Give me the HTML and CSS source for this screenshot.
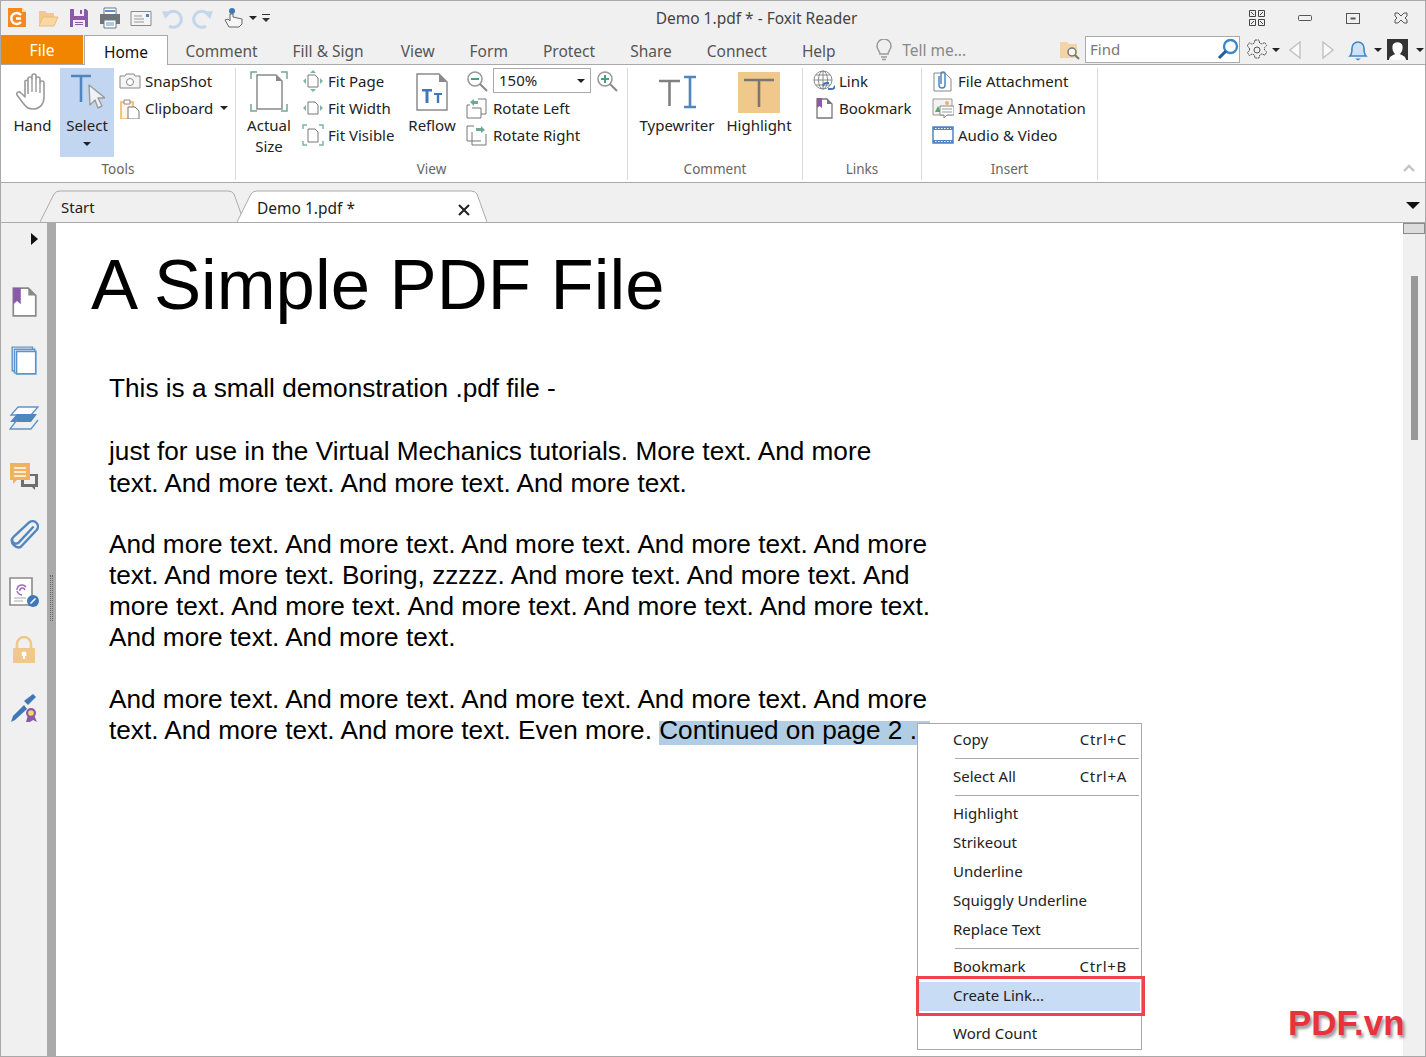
FILE: index.html
```html
<!DOCTYPE html>
<html lang="en">
<head>
    <meta charset="UTF-8">
    <title>Demo 1.pdf * - Foxit Reader</title>
    <link rel="stylesheet" href="styles.css">
</head>
<body>
<div class="window">

    <!-- title bar -->
    <div class="titlebar">
        <div class="qat">
            <svg viewBox="0 0 22 22"><path d="M2 1h14l4 4v15H2z" fill="#f28a1e"/><path d="M16 1l4 4h-4z" fill="#fbd9a8"/><path d="M15 8a5.500 5.500 0 1 0 0 7M10 11.500h5" fill="none" stroke="#fff" stroke-width="2.400"/></svg>
            <svg viewBox="0 0 22 22"><path d="M2 4h6l2 2h7v4H6l-4 9z" fill="#f0c98c"/><path d="M6 10h15l-4 9H2z" fill="#f7d7a4" stroke="#edbc78"/></svg>
            <svg viewBox="0 0 22 22"><path d="M2 2h16l2 2v16H2z" fill="#8a5aa8"/><path d="M6 2h10v7H6z" fill="#f1ebf5"/><path d="M12 3h2v4h-2z" fill="#8a5aa8"/><path d="M5 13h12v7H5z" fill="#f1ebf5"/><path d="M7 15h8v1H7zM7 17h8v1H7z" fill="#8a5aa8"/></svg>
            <svg viewBox="0 0 22 22"><path d="M5 1h12v7H5z" fill="#fff" stroke="#777"/><path d="M1 7h20v10H1z" fill="#6f7478"/><path d="M5 13h12v8H5z" fill="#fff" stroke="#6f7478"/><path d="M7 16h8M7 18h8" stroke="#5b92c9"/><path d="M6 4h10" stroke="#5b92c9" stroke-width="2"/></svg>
            <svg viewBox="0 0 22 22"><path d="M1 4.500h20v14H1z" fill="#f4f4f4" stroke="#8a8a8a"/><path d="M4 9h8M4 12h10M4 15h10" stroke="#999"/><path d="M16 7h3v3h-3z" fill="#4f86c0"/></svg>
            <svg viewBox="0 0 22 22"><path d="M5 9a8 8 0 1 1 3 10" fill="none" stroke="#c3d6ea" stroke-width="3"/><path d="M1 4l9 1-6 7z" fill="#c3d6ea"/></svg>
            <svg viewBox="0 0 22 22"><path d="M17 9a8 8 0 1 0-3 10" fill="none" stroke="#c3d6ea" stroke-width="3"/><path d="M21 4l-9 1 6 7z" fill="#c3d6ea"/></svg>
            <svg viewBox="0 0 22 22"><circle cx="9" cy="4" r="3" fill="#3f78b5"/><path d="M7 7v7l-2-2-3 1 4 7h10l3-3v-5l-9-2V7z" fill="#f6f6f6" stroke="#666"/></svg>
            <span class="caret qat-caret"></span>
            <span class="customize"></span>
        </div>
        <div class="title">Demo 1.pdf * - Foxit Reader</div>
        <div class="win-controls">
            <svg class="win-grid" viewBox="0 0 16 16"><path d="M.500.500h6v6h-6zM9.500.500h6v6h-6zM.500 9.500h6v6h-6zM9.500 9.500h6v6h-6z" fill="none" stroke="#444"/><path d="M2 2l3 3M14 2l-3 3M2 14l3-3M14 14l-3-3" stroke="#444"/></svg>
            <svg class="win-min" viewBox="0 0 14 6"><rect x=".5" y=".5" width="13" height="5" rx="1" fill="none" stroke="#555"/></svg>
            <svg class="win-max" viewBox="0 0 14 11"><rect x=".5" y=".5" width="13" height="10" fill="none" stroke="#555"/><path d="M4.500 5.500h5" stroke="#555" stroke-width="2"/></svg>
            <svg class="win-close" viewBox="0 0 14 12"><path d="M1 1h3l3 3 3-3h3v3l-2 2 2 2v3h-3L7 8l-3 3H1V8l2-2-2-2z" fill="none" stroke="#555"/></svg>
        </div>
    </div>

    <!-- ribbon tabs -->
    <div class="tabbar">
        <div class="file-tab">File</div>
        <div class="ribbon-tab active">Home</div>
        <div class="ribbon-tab">Comment</div>
        <div class="ribbon-tab">Fill &amp; Sign</div>
        <div class="ribbon-tab tab-view">View</div>
        <div class="ribbon-tab">Form</div>
        <div class="ribbon-tab">Protect</div>
        <div class="ribbon-tab">Share</div>
        <div class="ribbon-tab">Connect</div>
        <div class="ribbon-tab">Help</div>
        <div class="tell-me">
            <svg viewBox="0 0 18 22"><path d="M5 15c0-3-3-4-3-8a7 7 0 0 1 14 0c0 4-3 5-3 8z" fill="none" stroke="#999" stroke-width="1.500"/><path d="M6 18h6M7 20.500h4" stroke="#999" stroke-width="1.500"/></svg>
            Tell me...
        </div>
        <div class="tabbar-tools">
            <svg class="tool-folder" viewBox="0 0 22 22"><path d="M1 3h7l2 2h8v14H1z" fill="#f3d5a5"/><circle cx="13" cy="13" r="4" fill="#f5f5f5" stroke="#777" stroke-width="1.500"/><path d="M16 16l4 4" stroke="#777" stroke-width="2"/></svg>
            <div class="find-box">
                <span>Find</span>
                <svg viewBox="0 0 22 22"><circle cx="13.500" cy="8.500" r="6.500" fill="#fff" stroke="#3f86c6" stroke-width="2.400"/><path d="M9 13l-7 7" stroke="#1f5f99" stroke-width="3"/></svg>
            </div>
            <svg class="tool-gear" viewBox="0 0 22 22"><path d="M9 1h4l.6 3 2.400 1 2.600-1.600 2 3.200-2.200 2 .2 2.400 2.200 2-2 3.200-2.800-1.400-2.200 1.200-.8 3H9l-.6-3-2.400-1-2.600 1.600-2-3.200 2.200-2-.2-2.400-2.200-2 2-3.200L6 5.200 8.200 4z" fill="none" stroke="#555" stroke-dasharray="2 .6"/><circle cx="11" cy="11" r="3" fill="none" stroke="#555"/></svg>
            <span class="caret gear-caret"></span>
            <svg class="tool-prev" viewBox="0 0 12 18"><path d="M11 1v16L1 9z" fill="#fafafa" stroke="#c4c4c4" stroke-width="1.500"/></svg>
            <svg class="tool-next" viewBox="0 0 12 18"><path d="M1 1v16l10-8z" fill="#fafafa" stroke="#c4c4c4" stroke-width="1.500"/></svg>
            <svg class="tool-bell" viewBox="0 0 20 22"><path d="M2 17c2-2 2-4 2-8a6 6 0 0 1 12 0c0 4 0 6 2 8z" fill="#cfe2f5" stroke="#3f86c6" stroke-width="1.600"/><path d="M7 19.500h6l-3 2z" fill="#3f86c6"/></svg>
            <span class="caret bell-caret"></span>
            <svg class="tool-avatar" viewBox="0 0 21 21"><path d="M0 0h21v21H0z" fill="#333"/><path d="M2 21c0-4 5-5 6-6-2-2-3-5-2.500-8 .5-5 9.500-5 10 0 .5 3-.5 6-2.500 8 1 1 6 2 6 6z" fill="#fff"/></svg>
            <span class="caret avatar-caret"></span>
        </div>
    </div>

    <!-- ribbon -->
    <div class="ribbon">
        <div class="group group-tools">
            <div class="group-body">
                <div class="big-btn btn-hand">
                    <div class="big-icon">
                        <svg width="34" height="38" viewBox="0 0 34 38"><path d="M12 21V6a2 2 0 0 1 4 0V3a2 2 0 0 1 4 0v3a2 2 0 0 1 4 0v4a2 2 0 0 1 4 0v14c0 7-4 12-11 12-5 0-7-2-10-6l-6-8c-1-3 2-4 4-2l4 4V8a2 2 0 0 1 3 0" fill="#fff" stroke="#9a9a9a" stroke-width="1.600" stroke-linejoin="round"/><path d="M16 6v13M20 6v13M24 10v10" stroke="#9a9a9a" stroke-width="1.400"/></svg>
                    </div>
                    <div class="big-label">Hand</div>
                </div>
                <div class="big-btn btn-select">
                    <div class="big-icon">
                        <svg width="36" height="40" viewBox="0 0 36 40"><path d="M2 4h20M12 4v26" stroke="#4f86c0" stroke-width="2.600" fill="none"/><path d="M20 13l1 20 5-5 3 8 4-2-4-8h7z" fill="#eef3f9" stroke="#9a9a9a" stroke-width="1.400" stroke-linejoin="round"/></svg>
                    </div>
                    <div class="big-label">Select</div>
                    <span class="caret select-caret"></span>
                </div>
                <div class="small-col">
                    <div class="row">
                        <svg viewBox="0 0 22 22"><path d="M1 6h5l1-2h8l1 2h5v12H1z" fill="#f5f5f5" stroke="#888"/><circle cx="11" cy="12" r="3.500" fill="#fff" stroke="#888"/></svg>
                        SnapShot
                    </div>
                    <div class="row">
                        <svg viewBox="0 0 22 22"><path d="M2 5h12v17H2z" fill="#fdf6ea" stroke="#f0b25e" stroke-width="1.500"/><path d="M5 3h6v4H5z" fill="#fff" stroke="#888"/><path d="M9 10h7l4 4v8H9z" fill="#fff" stroke="#777"/></svg>
                        Clipboard
                        <span class="caret clip-caret"></span>
                    </div>
                </div>
            </div>
            <div class="group-label">Tools</div>
        </div>

        <div class="group group-view">
            <div class="group-body">
                <div class="big-btn btn-actual">
                    <div class="big-icon">
                        <svg width="38" height="42" viewBox="0 0 38 42"><path d="M7 4h19l6 6v28H7z" fill="#fff" stroke="#8a8a8a" stroke-width="1.500"/><path d="M26 4l6 6h-6z" fill="#8a8a8a"/><path d="M1 8V1h6M31 1h6v7M1 33v7h6M31 40h6v-7" fill="none" stroke="#6fa896" stroke-width="1.500"/></svg>
                    </div>
                    <div class="big-label">Actual<br>Size</div>
                </div>
                <div class="small-col col-fit">
                    <div class="row">
                        <svg viewBox="0 0 22 22"><path d="M6 5h7l3 3v9H6z" fill="#fff" stroke="#777"/><path d="M1 11l3-3v6zM21 11l-3-3v6zM11 0l-3 3h6zM11 22l-3-3h6z" fill="#7fb5a4"/></svg>
                        Fit Page
                    </div>
                    <div class="row">
                        <svg viewBox="0 0 22 22"><path d="M6 5h7l3 3v9H6z" fill="#fff" stroke="#777"/><path d="M1 11l3-3v6zM21 11l-3-3v6z" fill="#7fb5a4"/></svg>
                        Fit Width
                    </div>
                    <div class="row">
                        <svg viewBox="0 0 22 22"><path d="M6 5h7l3 3v10H6z" fill="#fff" stroke="#777"/><path d="M1 5V1h4M17 1h4v4M1 17v4h4M17 21h4v-4" fill="none" stroke="#7fb5a4" stroke-width="1.500"/></svg>
                        Fit Visible
                    </div>
                </div>
                <div class="big-btn btn-reflow">
                    <div class="big-icon">
                        <svg width="32" height="38" viewBox="0 0 32 38"><path d="M1 1h22l8 8v28H1z" fill="#fff" stroke="#8a8a8a" stroke-width="1.500"/><path d="M23 1l8 8h-8z" fill="#8a8a8a"/><path d="M6 16h10v2.500h-3.500V30h-3V18.500H6zM18 20h8v2h-2.800v8h-2.400v-8H18z" fill="#3f78b5"/></svg>
                    </div>
                    <div class="big-label">Reflow</div>
                </div>
                <div class="small-col col-zoom">
                    <div class="row">
                        <svg viewBox="0 0 22 22"><circle cx="9" cy="9" r="7" fill="#fff" stroke="#999" stroke-width="1.600"/><path d="M5 9h8" stroke="#4d9c80" stroke-width="2"/><path d="M14 14l7 7" stroke="#888" stroke-width="2"/></svg>
                        <div class="zoom-box">150%<span class="caret zoom-caret"></span></div>
                        <svg class="zoom-plus" viewBox="0 0 22 22"><circle cx="9" cy="9" r="7" fill="#fff" stroke="#999" stroke-width="1.600"/><path d="M5 9h8M9 5v8" stroke="#4d9c80" stroke-width="2"/><path d="M14 14l7 7" stroke="#888" stroke-width="2"/></svg>
                    </div>
                    <div class="row">
                        <svg viewBox="0 0 22 22"><path d="M12 2h8v15h-5v4H1V8h3M6 11h9v6" fill="#fff" stroke="#777"/><path d="M4 5l4-3v2h4v3H8v2z" fill="#6fa896"/></svg>
                        Rotate Left
                    </div>
                    <div class="row">
                        <svg viewBox="0 0 22 22"><path d="M8 2H1v15h5v4h14V10M6 8v9h9" fill="#fff" stroke="#777"/><path d="M19 6l-4-4v2h-5v3h5v2z" fill="#6fa896"/></svg>
                        Rotate Right
                    </div>
                </div>
            </div>
            <div class="group-label">View</div>
        </div>

        <div class="group group-comment">
            <div class="group-body">
                <div class="big-btn btn-type">
                    <div class="big-icon">
                        <svg width="38" height="34" viewBox="0 0 38 34"><path d="M1 6h21M11.500 6v25" stroke="#808080" stroke-width="2.600" fill="none"/><path d="M26 2h12M32 2v29M26 32h12" stroke="#4f86c0" stroke-width="2.600" fill="none"/></svg>
                    </div>
                    <div class="big-label">Typewriter</div>
                </div>
                <div class="big-btn btn-high">
                    <div class="big-icon">
                        <svg width="42" height="41" viewBox="0 0 42 41"><path d="M0 0h42v41H0z" fill="#f0c88c"/><path d="M6 8h30M21 8v27" stroke="#7a7670" stroke-width="2.600" fill="none"/></svg>
                    </div>
                    <div class="big-label">Highlight</div>
                </div>
            </div>
            <div class="group-label">Comment</div>
        </div>

        <div class="group group-links">
            <div class="group-body">
                <div class="small-col">
                    <div class="row">
                        <svg viewBox="0 0 22 22"><circle cx="10" cy="10" r="9" fill="#fff" stroke="#888"/><path d="M1 10h18M3 5h14M3 15h14M10 1v18" stroke="#888"/><ellipse cx="10" cy="10" rx="4.500" ry="9" fill="none" stroke="#888"/><path d="M11 16a3 2 0 0 1 3-3h2M21 16a3 2 0 0 1-3 3h-3" fill="none" stroke="#3f78b5" stroke-width="2"/></svg>
                        Link
                    </div>
                    <div class="row">
                        <svg viewBox="0 0 22 22"><path d="M4 2h10l5 5v14H4z" fill="#fff" stroke="#777" stroke-width="1.300"/><path d="M14 2l5 5h-5z" fill="#777"/><path d="M4 1h5v10l-2.500-2L4 11z" fill="#8a5aa8"/></svg>
                        Bookmark
                    </div>
                </div>
            </div>
            <div class="group-label">Links</div>
        </div>

        <div class="group group-insert">
            <div class="group-body">
                <div class="small-col">
                    <div class="row">
                        <svg viewBox="0 0 22 22"><path d="M2 3h11l6 6v12H2z" fill="#fff" stroke="#888"/><path d="M7 6v9a3 3 0 0 0 6 0V4a2 2 0 0 0-4 0v10" fill="none" stroke="#4f86c0" stroke-width="1.500"/></svg>
                        File Attachment
                    </div>
                    <div class="row">
                        <svg viewBox="0 0 22 22"><path d="M1 2h19v16H1z" fill="#f2f2f2" stroke="#999"/><circle cx="15" cy="6" r="2" fill="#f0b25e"/><path d="M3 15l3-6 3 6z" fill="#5aa46f"/><path d="M8 9h14v9h-7l-3 3v-3H8z" fill="#fff" stroke="#888"/><path d="M10 12h10M10 15h10" stroke="#999"/></svg>
                        Image Annotation
                    </div>
                    <div class="row">
                        <svg viewBox="0 0 22 22"><path d="M1 3h20v16H1z" fill="#fff" stroke="#4f86c0" stroke-width="1.500"/><path d="M1 3h20v3H1zM1 16h20v3H1z" fill="#4f86c0"/><path d="M3 4.500h16M3 17.500h16" stroke="#fff" stroke-dasharray="1.500 1.500"/></svg>
                        Audio &amp; Video
                    </div>
                </div>
            </div>
            <div class="group-label">Insert</div>
        </div>

        <svg class="collapse" viewBox="0 0 12 8"><path d="M1 7l5-5 5 5" fill="none" stroke="#c4c4c4" stroke-width="2.400"/></svg>
    </div>

    <!-- document tabs -->
    <div class="doc-tabs">
        <div class="doc-tab tab-start">
            <svg viewBox="0 0 204 33" preserveAspectRatio="none"><path d="M0 32L14 4q2-3 6-3h168q4 0 6 3l10 28" fill="#f0f0f0" stroke="#aaa"/></svg>
            <span>Start</span>
        </div>
        <div class="doc-tab tab-demo">
            <svg viewBox="0 0 250 33" preserveAspectRatio="none"><path d="M0 32L14 4q2-3 6-3h214q4 0 6 3l10 28" fill="#fff" stroke="#aaa"/></svg>
            <span>Demo 1.pdf *</span>
            <svg class="tab-close" viewBox="0 0 12 12"><path d="M1 1l10 10M11 1L1 11" stroke="#222" stroke-width="2"/></svg>
        </div>
        <span class="tabs-menu"></span>
    </div>

    <!-- main area -->
    <div class="main">
        <div class="rail">
            <div class="rail-arrow"></div>
            <div class="rail-icon">
                <svg viewBox="0 0 24 28"><path d="M2 1h14l7 7v19H2z" fill="#fff" stroke="#8a8a8a" stroke-width="1.600"/><path d="M16 1l7 7h-7z" fill="#8a8a8a"/><path d="M2 1h7v15l-3.500-3L2 16z" fill="#8a5aa8"/></svg>
            </div>
            <div class="rail-icon">
                <svg viewBox="0 0 24 28"><path d="M1 2h19v22H1z" fill="#fff" stroke="#5c93cb" stroke-width="1.300"/><path d="M3 4h19v22H3z" fill="#fff" stroke="#5c93cb" stroke-width="1.300"/><path d="M5 6h18v21H5z" fill="#fff" stroke="#5c93cb" stroke-width="1.600"/></svg>
            </div>
            <div class="rail-icon">
                <svg viewBox="0 0 30 26"><path d="M9 2h20l-7 8H2z" fill="#fff" stroke="#5c93cb" stroke-width="1.300"/><path d="M8 9h20l-6 8H1z" fill="#4f86c0"/><path d="M8 15l-7 9h21l7-9" fill="none" stroke="#5c93cb" stroke-width="1.300"/></svg>
            </div>
            <div class="rail-icon">
                <svg viewBox="0 0 30 28"><path d="M12 12h17v13h-3v3l-3-3H12z" fill="#6e6e6e"/><path d="M15 14h11v8H15z" fill="#f0f0f0"/><path d="M1 1h20v17H8l-4 4v-4H1z" fill="#f0b25e"/><path d="M5 6h12M5 10h12M5 14h12" stroke="#fff" stroke-width="1.500"/></svg>
            </div>
            <div class="rail-icon">
                <svg viewBox="0 0 28 28"><path d="M23 7L9 22a3.500 3.500 0 0 1-5-5L19 3a5 5 0 0 1 7 7L11 26c-4 2-10-3-8-8" fill="none" stroke="#4f86c0" stroke-width="2.200"/></svg>
            </div>
            <div class="rail-icon">
                <svg viewBox="0 0 30 30"><path d="M1 1h22v27H1z" fill="#fff" stroke="#8a8a8a" stroke-width="1.600"/><path d="M8 13a5 5 0 0 1 9-3M11 14a2.500 2.500 0 0 1 5-1M13 18a6 6 0 0 1-5-4" fill="none" stroke="#9a6ab8" stroke-width="1.400"/><path d="M5 21h12M5 24h9" stroke="#aaa"/><circle cx="24" cy="24" r="6" fill="#3f78b5"/><path d="M21.500 26.500l5-5" stroke="#fff" stroke-width="1.600"/></svg>
            </div>
            <div class="rail-icon">
                <svg viewBox="0 0 26 30"><path d="M6 13V9a7 7 0 0 1 14 0v4" fill="none" stroke="#f0c88c" stroke-width="2.600"/><path d="M2 13h22v15H2z" fill="#f0c88c"/><circle cx="13" cy="19" r="2.500" fill="#fff"/><path d="M12 20h2v4h-2z" fill="#fff"/></svg>
            </div>
            <div class="rail-icon">
                <svg viewBox="0 0 28 30"><path d="M1 29l2-6L14 12l3 4L5 27z" fill="#3f78b5"/><path d="M14 8l9-7 3 3-8 8z" fill="#3f78b5"/><path d="M16 29l2-7h6l3 7-4-2-3 2z" fill="#8a5aa8"/><circle cx="21" cy="20" r="5" fill="#8a5aa8"/><circle cx="21" cy="20" r="2.800" fill="#f6d860"/></svg>
            </div>
        </div>
        <div class="splitter"><div class="grip"></div></div>
        <div class="page">
            <h1>A Simple PDF File</h1>
            <div class="page-text">
                <p>This is a small demonstration .pdf file -</p>
                <p class="tall">just for use in the Virtual Mechanics tutorials. More text. And more<br>text. And more text. And more text. And more text.</p>
                <p>And more text. And more text. And more text. And more text. And more<br>text. And more text. Boring, zzzzz. And more text. And more text. And<br>more text. And more text. And more text. And more text. And more text.<br>And more text. And more text.</p>
                <p>And more text. And more text. And more text. And more text. And more<br>text. And more text. And more text. Even more. <span class="selected">Continued on page 2 .</span></p>
            </div>
        </div>
        <div class="scrollbar">
            <div class="scroll-btn"></div>
            <div class="scroll-thumb"></div>
        </div>
    </div>

    <!-- context menu, sits over the page -->
    <div class="context-menu">
        <div class="menu-item"><span>Copy</span><span class="shortcut">Ctrl+C</span></div>
        <div class="menu-sep"></div>
        <div class="menu-item"><span>Select All</span><span class="shortcut">Ctrl+A</span></div>
        <div class="menu-sep"></div>
        <div class="menu-item">Highlight</div>
        <div class="menu-item">Strikeout</div>
        <div class="menu-item">Underline</div>
        <div class="menu-item">Squiggly Underline</div>
        <div class="menu-item">Replace Text</div>
        <div class="menu-sep"></div>
        <div class="menu-item"><span>Bookmark</span><span class="shortcut">Ctrl+B</span></div>
        <div class="menu-item hover">Create Link...</div>
        <div class="menu-gap"></div>
        <div class="menu-item">Word Count</div>
    </div>
    <div class="red-box"></div>
    <div class="watermark">PDF.vn</div>
</div>
</body>
</html>
```

FILE: styles.css
```css
* {
    box-sizing: border-box;
}
body {
    margin: 0;
    font-family: "Noto Sans", "Open Sans", sans-serif;
    font-size: 15px;
    color: #222;
    background-color: #fff;
}
svg {
    display: block;
    flex-shrink: 0;
}
.window {
    position: relative;
    width: 1426px;
    height: 1057px;
    border: 1px solid #a9a9a9;
    display: flex;
    flex-direction: column;
    overflow: hidden;
    background-color: #f0f0f0;
}
.caret {
    display: inline-block;
    width: 0;
    height: 0;
    border-left: 4px solid transparent;
    border-right: 4px solid transparent;
    border-top: 4px solid #222;
    flex-shrink: 0;
}

/* title bar */
.titlebar {
    height: 34px;
    display: flex;
    align-items: center;
    flex-shrink: 0;
}
.qat {
    width: 269px;
    display: flex;
    align-items: center;
    gap: 9px;
    padding-left: 5px;
}
.qat svg {
    width: 22px;
    height: 22px;
}
.qat-caret {
    margin-left: -5px;
}
.customize {
    position: relative;
    width: 8px;
    height: 9px;
    margin-left: -4px;
    border-top: 1px solid #333;
}
.customize::after {
    content: "";
    position: absolute;
    left: 0;
    top: 3px;
    border-left: 4px solid transparent;
    border-right: 4px solid transparent;
    border-top: 4px solid #333;
}
.title {
    flex: 1;
    text-align: center;
    font-size: 15.500px;
    color: #444;
}
.win-controls {
    width: 182px;
    display: flex;
    align-items: center;
    padding-left: 6px;
}
.win-grid {
    width: 16px;
    height: 16px;
}
.win-min {
    width: 14px;
    height: 6px;
    margin-left: 33px;
}
.win-max {
    width: 14px;
    height: 11px;
    margin-left: 34px;
}
.win-close {
    width: 14px;
    height: 12px;
    margin-left: 34px;
}

/* ribbon tabs */
.tabbar {
    height: 30px;
    display: flex;
    flex-shrink: 0;
    border-bottom: 1px solid #a9a9a9;
    font-size: 15.500px;
    color: #555;
}
.file-tab {
    width: 82px;
    height: 29px;
    background-color: #f28500;
    color: #fff;
    text-align: center;
    line-height: 31px;
}
.ribbon-tab {
    padding: 0 17.500px;
    line-height: 32px;
    white-space: nowrap;
}
.ribbon-tab.active {
    width: 84px;
    height: 30px;
    margin-left: 1px;
    padding: 0;
    text-align: center;
    background-color: #fff;
    border: 1px solid #a9a9a9;
    border-bottom: none;
    color: #111;
}
.tab-view {
    margin-left: 2px;
}
.tell-me {
    display: flex;
    align-items: center;
    gap: 9px;
    margin-left: 22px;
    padding-top: 1px;
    color: #888;
    white-space: nowrap;
}
.tell-me svg {
    width: 18px;
    height: 22px;
}
.tabbar-tools {
    margin-left: auto;
    width: 366px;
    display: flex;
    align-items: center;
}
.tool-folder {
    width: 22px;
    height: 22px;
}
.find-box {
    width: 155px;
    height: 27px;
    margin-left: 4px;
    padding: 0 0 2px 4px;
    display: flex;
    align-items: center;
    justify-content: space-between;
    background-color: #fff;
    border: 1px solid #aaa;
    color: #777;
    font-size: 15px;
}
.find-box svg {
    width: 22px;
    height: 22px;
}
.tool-gear {
    width: 22px;
    height: 22px;
    margin-left: 6px;
}
.gear-caret {
    margin-left: 4px;
}
.tool-prev {
    width: 12px;
    height: 18px;
    margin-left: 9px;
}
.tool-next {
    width: 12px;
    height: 18px;
    margin-left: 21px;
}
.tool-bell {
    width: 20px;
    height: 22px;
    margin-left: 14px;
}
.bell-caret {
    margin-left: 6px;
}
.tool-avatar {
    width: 21px;
    height: 21px;
    margin-left: 5px;
}
.avatar-caret {
    margin-left: 8px;
}

/* ribbon */
.ribbon {
    height: 118px;
    padding-top: 3px;
    display: flex;
    flex-shrink: 0;
    background-color: #fff;
    border-bottom: 1px solid #a9a9a9;
}
.group {
    height: 112px;
    display: flex;
    flex-direction: column;
    border-right: 1px solid #d9d9d9;
    flex-shrink: 0;
}
.group-tools {
    width: 235px;
}
.group-view {
    width: 392px;
}
.group-comment {
    width: 175px;
}
.group-links {
    width: 119px;
}
.group-insert {
    width: 176px;
}
.group-body {
    flex: 1;
    display: flex;
}
.group-tools .group-body {
    padding-left: 4px;
}
.group-view .group-body {
    padding-left: 10px;
}
.group-comment .group-body {
    padding-left: 7px;
}
.group-links .group-body {
    padding-left: 10px;
}
.group-insert .group-body {
    padding-left: 10px;
}
.group-label {
    height: 22px;
    line-height: 22px;
    text-align: center;
    font-size: 13.500px;
    color: #666;
}
.big-btn {
    height: 89px;
    display: flex;
    flex-direction: column;
    align-items: center;
    line-height: 21px;
    text-align: center;
    white-space: nowrap;
}
.big-icon {
    height: 48px;
    flex-shrink: 0;
    display: flex;
    align-items: center;
    justify-content: center;
}
.big-label {
    margin-top: -1px;
}
.btn-hand {
    width: 55px;
}
.btn-select {
    width: 54px;
    background-color: #c3d6f1;
}
.select-caret {
    margin-top: 6px;
}
.btn-actual {
    width: 46px;
}
.btn-reflow {
    width: 54px;
    margin-left: 9px;
}
.btn-type {
    width: 84px;
}
.btn-high {
    width: 80px;
}
.small-col {
    display: flex;
    flex-direction: column;
}
.group-tools .small-col {
    margin-left: 5px;
}
.col-fit {
    width: 94px;
    margin-left: 10px;
}
.col-zoom {
    margin-left: 7px;
}
.row {
    height: 27px;
    padding-bottom: 2px;
    display: flex;
    align-items: center;
    white-space: nowrap;
}
.row > svg {
    width: 22px;
    height: 22px;
    margin-right: 4px;
}
.col-zoom .row > svg {
    margin-right: 5px;
}
.clip-caret {
    margin-left: 7px;
}
.zoom-box {
    position: relative;
    width: 98px;
    height: 25px;
    line-height: 22px;
    padding-left: 5px;
    border: 1px solid #aaa;
}
.zoom-caret {
    position: absolute;
    right: 5px;
    top: 10px;
}
.col-zoom .row > .zoom-plus {
    margin-left: 5px;
    margin-right: 0;
}
.collapse {
    width: 12px;
    height: 8px;
    margin-left: auto;
    margin-right: 10px;
    margin-top: 96px;
}

/* document tabs */
.doc-tabs {
    height: 40px;
    position: relative;
    display: flex;
    flex-shrink: 0;
    padding: 7px 0 0 39px;
    border-bottom: 1px solid #a9a9a9;
}
.doc-tab {
    position: relative;
    height: 33px;
    line-height: 36px;
    font-size: 15.500px;
}
.doc-tab > svg:first-child {
    position: absolute;
    left: 0;
    top: 0;
    width: 100%;
    height: 100%;
}
.doc-tab span {
    position: relative;
}
.tab-start {
    width: 204px;
    padding-left: 21px;
    font-size: 15px;
    line-height: 35px;
}
.tab-demo {
    width: 250px;
    margin-left: -7px;
    padding-left: 20px;
}
.tab-close {
    position: absolute;
    left: 221px;
    top: 14px;
    width: 12px;
    height: 12px;
}
.tabs-menu {
    position: absolute;
    right: 5px;
    top: 19px;
    width: 0;
    height: 0;
    border-left: 7px solid transparent;
    border-right: 7px solid transparent;
    border-top: 7px solid #111;
}

/* main area */
.main {
    flex: 1;
    min-height: 0;
    display: flex;
    background-color: #fff;
}
.rail {
    width: 46px;
    flex-shrink: 0;
    background-color: #f0f0f0;
}
.rail-arrow {
    width: 0;
    height: 0;
    margin: 10px 0 28px 30px;
    border-top: 6px solid transparent;
    border-bottom: 6px solid transparent;
    border-left: 7px solid #111;
}
.rail-icon {
    height: 58px;
    display: flex;
    align-items: center;
    justify-content: center;
    padding-right: 1px;
}
.rail-icon svg {
    width: 30px;
    height: 30px;
}
.splitter {
    width: 9px;
    flex-shrink: 0;
    padding-top: 352px;
    background-color: #aaa;
}
.grip {
    width: 3px;
    height: 46px;
    margin-left: 3px;
    border-left: 1px dotted #666;
    border-right: 1px dotted #666;
}
.page {
    flex: 1;
    min-width: 0;
    font-family: "Liberation Sans", Arial, sans-serif;
    color: #000;
}
.page h1 {
    margin: 22px 0 48px 35px;
    font-size: 70.700px;
    font-weight: normal;
    line-height: 80px;
    white-space: nowrap;
}
.page-text {
    margin-left: 53px;
    font-size: 26.200px;
    line-height: 31px;
    white-space: nowrap;
}
.page-text p {
    margin: 0 0 31px;
}
.page-text p.tall {
    line-height: 32px;
    margin-bottom: 30px;
}
.selected {
    display: inline-block;
    height: 24px;
    line-height: 19px;
    padding-right: 13px;
    background-color: #b0cde3;
}
.scrollbar {
    width: 22px;
    flex-shrink: 0;
    background-color: #f0f0f0;
}
.scroll-btn {
    height: 11px;
    background-color: #dcdcdc;
    border: 1px solid #8a8a8a;
}
.scroll-thumb {
    width: 7px;
    height: 164px;
    margin: 42px 0 0 8px;
    background-color: #999;
}

/* context menu */
.context-menu {
    position: absolute;
    left: 916px;
    top: 722px;
    width: 225px;
    height: 327px;
    padding: 2px 1px;
    background-color: #fff;
    border: 1px solid #aaa;
    font-size: 15px;
}
.menu-item {
    height: 29px;
    padding: 0 13px 3px 34px;
    display: flex;
    align-items: center;
    justify-content: space-between;
}
.shortcut {
    letter-spacing: 0.700px;
}
.menu-item.hover {
    background-color: #c8dcf6;
}
.menu-sep {
    height: 8px;
    margin: 0 1px 0 36px;
    background: linear-gradient(#aaa, #aaa) 0 3px / 100% 1px no-repeat;
}
.menu-gap {
    height: 9px;
}
.red-box {
    position: absolute;
    left: 915px;
    top: 975px;
    width: 229px;
    height: 40px;
    border: 3px solid #f0444c;
}
.watermark {
    position: absolute;
    left: 1287px;
    top: 1002px;
    font-family: "Liberation Sans", Arial, sans-serif;
    font-size: 35px;
    font-weight: bold;
    color: #e8323e;
    text-shadow: 2px 3px 3px rgba(0, 0, 0, 0.4);
}
```
